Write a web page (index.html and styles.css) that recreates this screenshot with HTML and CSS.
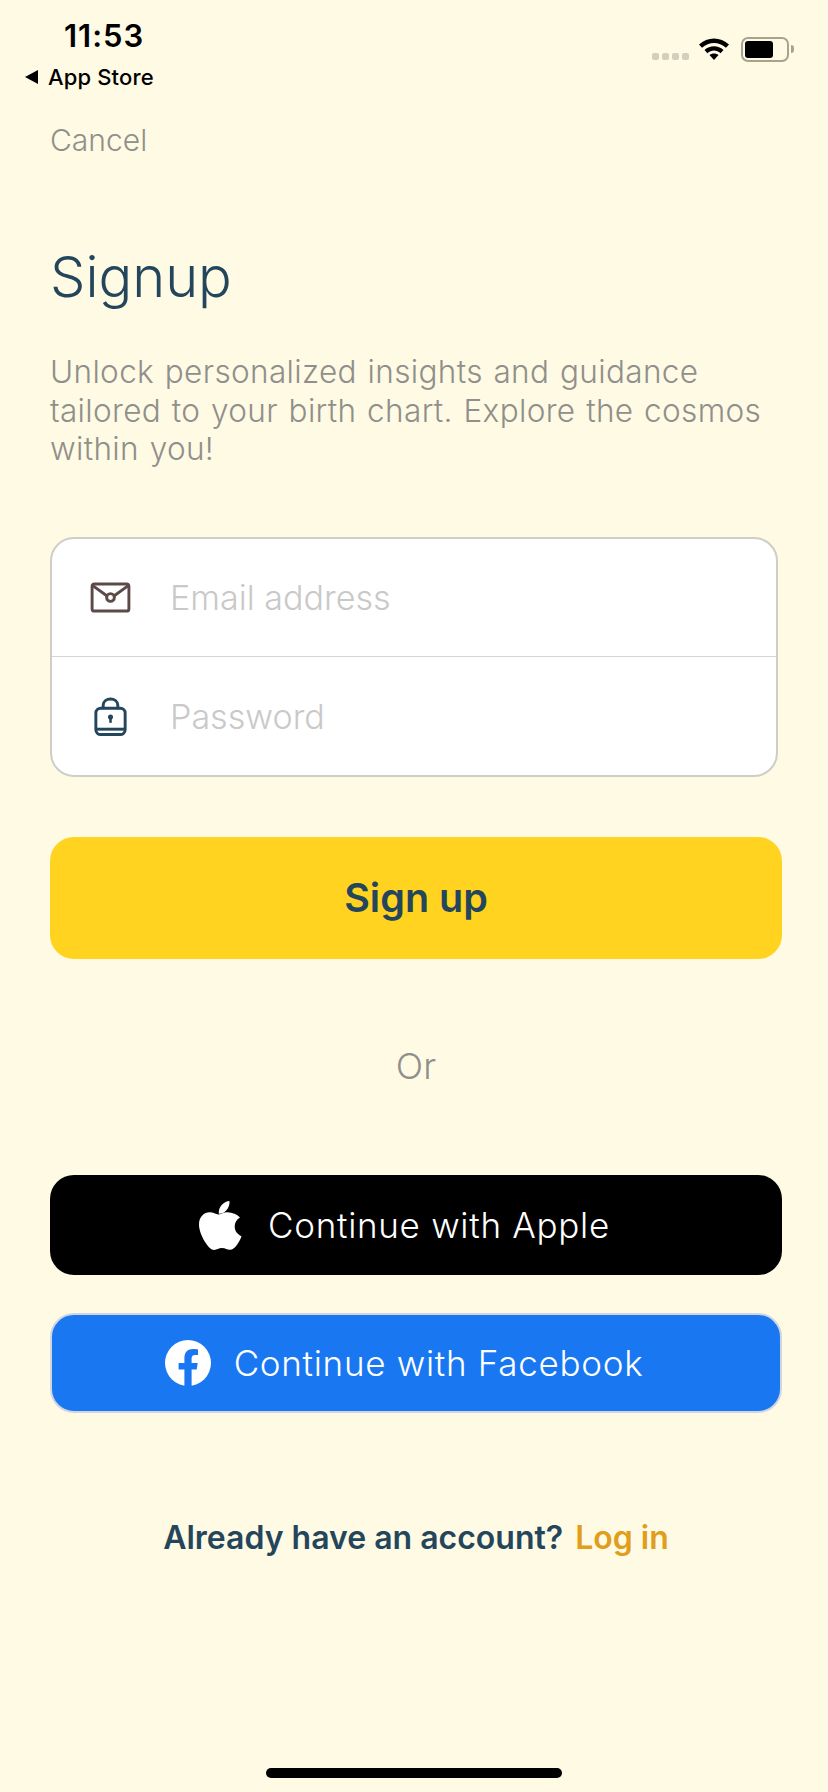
FILE: index.html
```html
<!DOCTYPE html>
<html lang="en">
<head>
    <meta charset="UTF-8">
    <meta name="viewport" content="width=device-width, initial-scale=1.0">
    <title>Signup</title>
    <link rel="stylesheet" href="styles.css">
</head>
<body>
    <div class="screen">
        <div class="status-bar">
            <div class="status-left">
                <span class="clock">11:53</span>
                <span class="back-app"><span class="back-arrow"></span>App Store</span>
            </div>
            <div class="status-right">
                <span class="signal"><i></i><i></i><i></i><i></i></span>
                <svg class="wifi" width="32" height="24" viewBox="0 0 32 24">
                    <path d="M1 8.5 C9.5 0.5 22.5 0.5 31 8.5 L28 11.8 C21 5.3 11 5.3 4 11.8 Z" fill="#000"/>
                    <path d="M6.5 14 C12 9 20 9 25.5 14 L22.6 17.2 C18.5 13.6 13.5 13.6 9.4 17.2 Z" fill="#000"/>
                    <path d="M11.5 19 C14.2 17 17.8 17 20.5 19 L16 24 Z" fill="#000"/>
                </svg>
                <span class="battery"><span class="battery-level"></span></span>
                <span class="battery-cap"></span>
            </div>
        </div>

        <main class="content">
            <a class="cancel">Cancel</a>
            <h1 class="title">Signup</h1>
            <p class="intro">Unlock personalized insights and guidance tailored to your birth chart. Explore the cosmos within you!</p>

            <div class="fields">
                <div class="field">
                    <svg class="field-icon" width="41" height="31" viewBox="0 0 42 32" fill="none">
                        <rect x="2" y="2" width="38" height="28" rx="2.5" stroke="#5c4a48" stroke-width="3"/>
                        <path d="M3 4 L17.5 14.5 M39 4 L24.5 14.5" stroke="#5c4a48" stroke-width="3"/>
                        <circle cx="21" cy="16" r="4" stroke="#5c4a48" stroke-width="3"/>
                    </svg>
                    <span class="placeholder">Email address</span>
                </div>
                <div class="field field-last">
                    <svg class="field-icon" width="41" height="42" viewBox="0 0 42 42" fill="none">
                        <path d="M13.5 14 V10 C13.5 1.5 28.5 1.5 28.5 10 V14" stroke="#24465c" stroke-width="3"/>
                        <rect x="6" y="13" width="30" height="27" rx="5" stroke="#24465c" stroke-width="3"/>
                        <path d="M6 34.5 H36" stroke="#24465c" stroke-width="3"/>
                        <circle cx="21" cy="22" r="2.6" fill="#24465c"/>
                        <path d="M21 22 V28" stroke="#24465c" stroke-width="2.6"/>
                    </svg>
                    <span class="placeholder">Password</span>
                </div>
            </div>

            <button class="btn-signup">Sign up</button>

            <p class="or">Or</p>

            <button class="btn btn-apple">
                <svg width="44" height="50" viewBox="0 0 44 50">
                    <path d="M31.5 1 C31.8 5 30.4 8 28.4 10.2 C26.3 12.6 23.4 14 20.8 13.8 C20.4 10 22 6.9 23.9 4.8 C26 2.6 29.1 1.1 31.5 1 Z" fill="#fff"/>
                    <path d="M42 17.5 C38.4 19.8 36.6 22.8 36.7 26.6 C36.8 31.3 39.5 34.5 43.5 36.2 C42.5 39.2 41 42 39.2 44.5 C37 47.6 34.8 49.8 31.8 49.8 C28.8 49.8 27.6 48 24 48 C20.4 48 18.9 49.8 16.2 49.9 C13.2 50 10.8 47.3 8.6 44.2 C3.9 37.6 1 30.2 1 24.5 C1 16.6 6.2 12.4 11.6 12.3 C14.9 12.2 17.9 14.5 20.2 14.5 C22.4 14.5 25.6 12 29.6 12.2 C34.5 12.4 38.8 14 42 17.5 Z" fill="#fff"/>
                </svg>
                <span>Continue with Apple</span>
            </button>
            <button class="btn btn-facebook">
                <svg width="46" height="46" viewBox="0 0 46 46">
                    <circle cx="23" cy="23" r="23" fill="#fff"/>
                    <path d="M19.4 46 V29.6 H13.6 V23 H19.4 V18 C19.4 12.2 22.8 9 28.1 9 C30.6 9 33 9.4 33 9.4 V15 H30.2 C27.4 15 26.6 16.8 26.6 18.6 V23 H32.7 L31.7 29.6 H26.6 V46 Z" fill="#1977f2"/>
                </svg>
                <span>Continue with Facebook</span>
            </button>

            <p class="login-row">
                <span class="login-q">Already have an account?</span>
                <a class="login-link">Log in</a>
            </p>
        </main>

        <div class="home-indicator"></div>
    </div>
</body>
</html>
```

FILE: styles.css
```css
* {
    box-sizing: border-box;
}
html, body {
    margin: 0;
    padding: 0;
}
body {
    background-color: #fffae4;
    font-family: Inter, "Liberation Sans", sans-serif;
}
.screen {
    width: 828px;
    height: 1792px;
    display: flex;
    flex-direction: column;
    overflow: hidden;
}

/* Status bar */
.status-bar {
    height: 118px;
    display: flex;
    justify-content: space-between;
    padding: 16px 34px 0 25px;
}
.status-left {
    display: flex;
    flex-direction: column;
    align-items: flex-start;
}
.clock {
    font-weight: 600;
    font-size: 31px;
    line-height: 40px;
    letter-spacing: 1px;
    margin-left: 39px;
    color: #000;
}
.back-app {
    display: flex;
    align-items: center;
    font-size: 22px;
    font-weight: 500;
    line-height: 26px;
    margin-top: 8px;
    letter-spacing: 0.15px;
    color: #000;
}
.back-arrow {
    width: 0;
    height: 0;
    border-top: 7px solid transparent;
    border-bottom: 7px solid transparent;
    border-right: 13px solid #000;
    margin: 0 10px 0 0;
}
.status-right {
    display: flex;
    align-items: flex-start;
    padding-top: 21px;
}
.signal {
    display: flex;
    gap: 3px;
    margin: 16px 9px 0 0;
}
.signal i {
    width: 7px;
    height: 7px;
    border-radius: 2px;
    background: #d3cfba;
}
.wifi {
    margin-top: -1px;
}
.battery {
    width: 48px;
    height: 25px;
    margin-left: 11px;
    border: 2px solid #a8a38f;
    border-radius: 7px;
    padding: 2px;
}
.battery-level {
    display: block;
    width: 28px;
    height: 17px;
    background: #000;
    border-radius: 3px;
}
.battery-cap {
    width: 3px;
    height: 8px;
    margin: 8px 0 0 2px;
    background: #a8a38f;
    border-radius: 0 3px 3px 0;
}

/* Content */
.content {
    flex: 1;
    padding: 0 46px 0 50px;
    display: flex;
    flex-direction: column;
}
.cancel {
    font-size: 30px;
    line-height: 44px;
    font-weight: 300;
    color: #8f8f8b;
}
.title {
    margin: 79px 0 0;
    font-size: 56px;
    line-height: 72px;
    font-weight: 300;
    color: #24465c;
}
.intro {
    margin: 40px 0 0;
    width: 730px;
    font-size: 31.5px;
    line-height: 38.6px;
    font-weight: 300;
    letter-spacing: 0.35px;
    word-spacing: 1.5px;
    color: #8f8f8b;
}

.fields {
    margin-top: 68px;
    width: 728px;
    height: 240px;
    background: #fff;
    border: 2px solid #cfcdc8;
    border-radius: 24px;
    display: flex;
    flex-direction: column;
}
.field {
    flex: 1;
    display: flex;
    align-items: center;
    padding-left: 38px;
    border-bottom: 1px solid #d4d4d4;
}
.field-last {
    border-bottom: none;
}
.field-icon {
    flex: none;
}
.placeholder {
    margin-left: 39px;
    font-size: 34.1px;
    font-weight: 300;
    color: #c9c9c9;
}

.btn-signup {
    margin-top: 60px;
    width: 732px;
    height: 122px;
    border: none;
    border-radius: 24px;
    background: #ffd31f;
    color: #24465c;
    font-family: inherit;
    font-size: 39.5px;
    font-weight: 600;
}
.or {
    margin: 88px 0 0;
    text-align: center;
    font-size: 36px;
    line-height: 38px;
    font-weight: 300;
    color: #8f8f8b;
}
.btn {
    width: 732px;
    height: 100px;
    border-radius: 24px;
    display: flex;
    align-items: center;
    justify-content: center;
    padding-right: 30px;
    font-family: inherit;
    font-size: 35px;
    font-weight: 300;
    letter-spacing: 0.7px;
    color: #fff;
    gap: 26px;
}
.btn-apple {
    margin-top: 90px;
    background: #000;
    border: none;
}
.btn-facebook {
    margin-top: 38px;
    background: #1977f2;
    border: 2px solid #cfd6e0;
    gap: 23px;
}
.login-row {
    margin: 104px 0 0;
    width: 732px;
    display: flex;
    justify-content: center;
    gap: 12px;
    font-size: 32px;
    line-height: 42px;
    font-weight: 600;
}
.login-q {
    color: #24465c;
}
.login-link {
    color: #e09e1a;
}

.home-indicator {
    width: 296px;
    height: 10px;
    border-radius: 5px;
    background: #000;
    margin: 0 auto 14px;
}
```
